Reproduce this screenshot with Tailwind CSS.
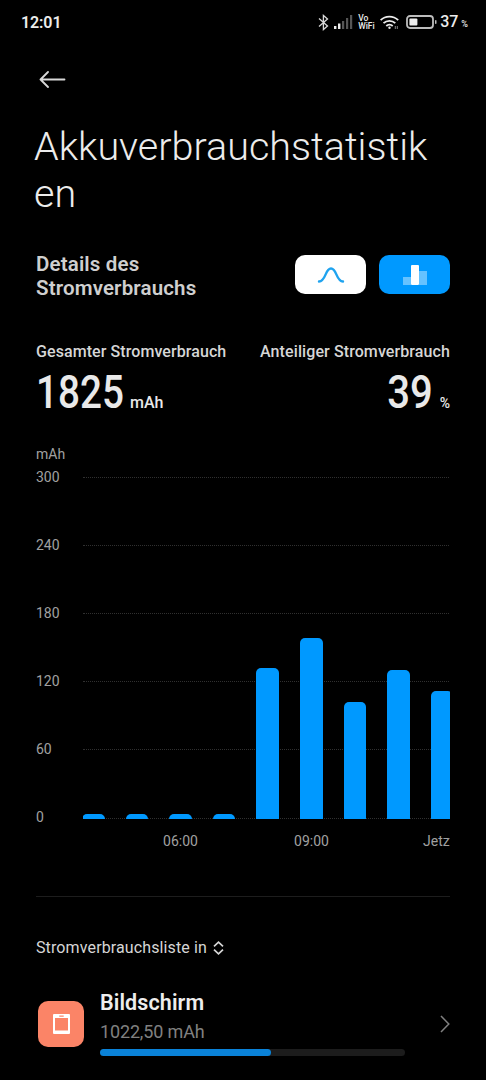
<!DOCTYPE html>
<html lang="de">
<head>
    <meta charset="UTF-8">
    <meta name="viewport" content="width=device-width, initial-scale=1.0">
    <title>Akkuverbrauchstatistiken</title>
    <script src="https://cdn.jsdelivr.net/npm/@tailwindcss/browser@4"></script>
</head>
<body class="bg-black font-['Roboto',sans-serif] text-[#d6d6d6]">
<div class="w-[486px] h-[1080px] overflow-hidden flex flex-col">

    <!-- Status bar -->
    <div class="h-11 shrink-0 flex items-center justify-between pl-[21px] pr-[18px] text-[#ececec]">
        <span class="text-base font-semibold tracking-[-0.1px] pt-px">12:01</span>
        <div class="flex items-center">
            <svg class="w-[11px] h-[17px]" viewBox="0 0 11 17" fill="none" stroke="#d8d8d8" stroke-width="1.3">
                <path d="M1 4.5 9.5 12 5.4 15.6V1.4L9.5 5 1 12.5"/>
            </svg>
            <svg class="w-[19px] h-[14px] ml-[5px]" viewBox="0 0 19 14">
                <rect x="0" y="11" width="2.4" height="3" fill="#ececec"/>
                <rect x="4" y="8.5" width="2.4" height="5.5" fill="#ececec"/>
                <rect x="8" y="6" width="2.2" height="8" fill="#555"/>
                <rect x="12" y="3" width="2.2" height="11" fill="#555"/>
                <rect x="16" y="0" width="2.2" height="14" fill="#555"/>
            </svg>
            <div class="ml-[5px] w-[17px] flex flex-col text-[8.5px] leading-[8px] font-medium whitespace-nowrap">
                <span>Vo</span>
                <span>WiFi</span>
            </div>
            <svg class="w-[20px] h-[15px] ml-[5px]" viewBox="0 0 20 15" fill="none" stroke="#ececec" stroke-width="1.8">
                <path d="M.6 5.2a12.6 12.6 0 0 1 17.6 0"/>
                <path d="M3.5 8.2a8.4 8.4 0 0 1 11.8 0"/>
                <path d="M6.3 11a4.7 4.7 0 0 1 6.4 0"/>
                <circle cx="9.5" cy="12.8" r="1.2" fill="#ececec" stroke="none"/>
                <path stroke="#888" stroke-width="1" d="M15.3 11v3M17.3 11v3"/>
            </svg>
            <svg class="w-[31px] h-[14px] ml-[6px]" viewBox="0 0 31 14" fill="none">
                <rect x="1" y="1" width="26" height="12" rx="3" stroke="#bdbdbd" stroke-width="1.8"/>
                <rect x="3.4" y="3.4" width="8" height="7.2" rx="1" fill="#ececec"/>
                <rect x="29" y="5" width="1.5" height="4" rx=".7" fill="#bdbdbd"/>
            </svg>
            <span class="ml-[3px] text-base font-medium">37</span>
            <span class="ml-[3px] mt-[5px] text-[9px] leading-none font-medium">%</span>
        </div>
    </div>

    <!-- Back -->
    <div class="h-[80px] shrink-0 pl-[39px] pt-[27px]">
        <svg class="w-[27px] h-[18px]" viewBox="0 0 27 18" fill="none" stroke="#d8d8d8" stroke-width="1.8" stroke-linecap="round" stroke-linejoin="round">
            <path d="M25.5 8.5H1.5M9 1 1.5 8.5 9 16"/>
        </svg>
    </div>

    <h1 class="h-[93px] shrink-0 pl-[34px] text-[39.5px] leading-[46.5px] font-light text-[#ececec]">Akkuverbrauchstatistik<br>en</h1>

    <!-- Details header -->
    <div class="mt-[35px] h-12 shrink-0 flex justify-between pl-9 pr-9">
        <h2 class="text-[20.5px] leading-6 font-semibold tracking-[0.15px] text-[#cfcfcf]">Details des<br>Stromverbrauchs</h2>
        <div class="flex gap-[13px] mt-[3px]">
            <button class="w-[71px] h-[39px] rounded-[10px] bg-white flex items-center justify-center">
                <svg class="w-[28px] h-[18px]" viewBox="0 0 28 18" fill="none" stroke="#1fa3ef" stroke-width="2.4" stroke-linecap="round">
                    <path d="M2 15.5c7 0 6-13 12-13s5 13 12 13"/>
                </svg>
            </button>
            <button class="w-[71px] h-[39px] rounded-[10px] bg-[#0099ff] flex items-center justify-center">
                <span class="flex items-end">
                    <span class="w-2 h-2 bg-[#66c2ff]"></span>
                    <span class="w-2 h-5 bg-white rounded-[1px]"></span>
                    <span class="w-2 h-[14px] bg-[#66c2ff]"></span>
                </span>
            </button>
        </div>
    </div>

    <!-- Totals -->
    <div class="mt-[42px] h-[79px] shrink-0 flex justify-between px-9">
        <div>
            <div class="text-base leading-5 font-medium tracking-[0.08px]">Gesamter Stromverbrauch</div>
            <div class="flex items-baseline mt-[5px] text-[#e9e9e9]">
                <span class="w-[94px] text-[45.5px] leading-[52px] font-medium origin-left scale-x-[0.85]">1825</span>
                <span class="text-base font-medium">mAh</span>
            </div>
        </div>
        <div class="text-right">
            <div class="text-base leading-5 font-medium tracking-[0.1px]">Anteiliger Stromverbrauch</div>
            <div class="flex items-baseline justify-end mt-[5px] text-[#e9e9e9]">
                <span class="text-[45.5px] leading-[52px] font-medium origin-right scale-x-[0.88]">39</span>
                <span class="ml-[7px] text-sm font-medium">%</span>
            </div>
        </div>
    </div>

    <!-- Chart -->
    <div class="mt-[23px] pl-9 pr-9 text-sm text-[#a0a0a0] shrink-0">
        <div class="h-5 leading-5">mAh</div>
        <div class="mt-[3px] flex">
            <div class="w-[47px] flex flex-col gap-12 leading-5">
                <span>300</span>
                <span>240</span>
                <span>180</span>
                <span>120</span>
                <span>60</span>
                <span>0</span>
            </div>
            <div class="w-[367px] h-[352px] pt-[10px] grid overflow-hidden">
                <div class="[grid-area:1/1] h-[342px] flex flex-col gap-[67px]">
                    <div class="border-t border-dotted border-[#303030]"></div>
                    <div class="border-t border-dotted border-[#303030]"></div>
                    <div class="border-t border-dotted border-[#303030]"></div>
                    <div class="border-t border-dotted border-[#303030]"></div>
                    <div class="border-t border-dotted border-[#303030]"></div>
                    <div class="mt-px border-t border-dotted border-[#303030]"></div>
                </div>
                <div class="[grid-area:1/1] h-[342px] w-[373px] -ml-px flex items-end gap-[21px] *:w-[22.6px] *:shrink-0 *:bg-[#0099ff] *:rounded-t-[5px]">
                    <div style="height: 5.5px"></div>
                    <div style="height: 5px"></div>
                    <div style="height: 5px"></div>
                    <div style="height: 5.5px"></div>
                    <div style="height: 151px"></div>
                    <div style="height: 181px"></div>
                    <div style="height: 117px"></div>
                    <div style="height: 149px"></div>
                    <div style="height: 128.5px"></div>
                </div>
            </div>
        </div>
        <!-- the last label runs past the edge of the scroll area -->
        <div class="ml-[47px] mt-[4px] w-[367px] h-5 leading-5 flex overflow-hidden whitespace-nowrap">
            <span class="ml-[32px] w-[131px] shrink-0 text-center">06:00</span>
            <span class="w-[131px] shrink-0 text-center">09:00</span>
            <span class="ml-[46px] shrink-0">Jetzt</span>
        </div>
    </div>

    <div class="mt-[45px] mx-9 h-px shrink-0 bg-[#1d1d1d]"></div>

    <!-- List -->
    <div class="mt-[41px] h-5 shrink-0 px-9 flex items-center">
        <span class="text-base leading-5 tracking-[0.12px]">Stromverbrauchsliste in</span>
        <svg class="ml-[6px] w-[11px] h-[14px]" viewBox="0 0 11 14" fill="none" stroke="#d6d6d6" stroke-width="1.7">
            <path d="M1 5.3 5.5 1.2 10 5.3M1 8.7l4.5 4.1L10 8.7"/>
        </svg>
    </div>
    <div class="mt-[32px] pl-[38px] pr-9 flex shrink-0">
        <div class="mt-[11px] w-[46px] h-[46px] rounded-[10px] bg-[#fb8467] flex items-center justify-center">
            <svg class="w-[17px] h-[20px]" viewBox="0 0 17 20">
                <path fill="#fff" fill-rule="evenodd" d="M1 0h15a1 1 0 0 1 1 1v18a1 1 0 0 1-1 1H1a1 1 0 0 1-1-1V1a1 1 0 0 1 1-1ZM2 4v12.5h13V4ZM6.3 1.5v1.2h4.4V1.5Z"/>
            </svg>
        </div>
        <div class="ml-4 w-[305px]">
            <div class="mt-px text-[21.5px] leading-6 font-semibold tracking-[0.1px] text-[#ededed]">Bildschirm</div>
            <div class="mt-[5px] text-lg leading-6 tracking-[-0.15px] text-[#808080]">1022,50 mAh</div>
            <div class="mt-[5px] h-[7px] rounded-full bg-[#1c1c1c]">
                <div class="h-full rounded-full bg-[#0a82d8]" style="width: 56%"></div>
            </div>
        </div>
        <svg class="ml-auto mt-[25px] w-[10px] h-[18px]" viewBox="0 0 10 18" fill="none" stroke="#808080" stroke-width="1.5">
            <path d="m1 1 7.8 8L1 17"/>
        </svg>
    </div>
</div>
</body>
</html>
